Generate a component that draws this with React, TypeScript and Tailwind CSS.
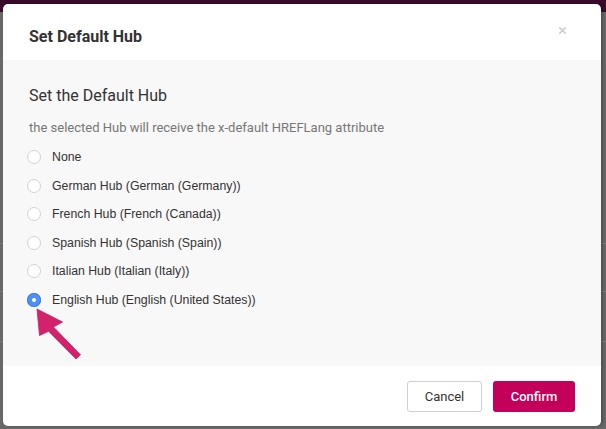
import { X } from "lucide-react";

const hubs = [
  "None",
  "German Hub (German (Germany))",
  "French Hub (French (Canada))",
  "Spanish Hub (Spanish (Spain))",
  "Italian Hub (Italian (Italy))",
  "English Hub (English (United States))",
];

const SELECTED = 5;

function Radio({ checked }: { checked: boolean }) {
  if (checked) {
    return (
      <span className="flex h-[14px] w-[14px] shrink-0 items-center justify-center rounded-full bg-[#4f8ff7] shadow-[inset_0_0_0_1px_#3f7fe6]">
        <span className="h-[4px] w-[4px] rounded-full bg-white" />
      </span>
    );
  }
  return (
    <span className="h-[14px] w-[14px] shrink-0 rounded-full border-[1.5px] border-[#d3d3d3] bg-white" />
  );
}

export default function App() {
  return (
    <div className="relative h-[429px] w-[606px] overflow-hidden bg-[#686868] font-['Roboto',sans-serif]">
      {/* page behind the overlay */}
      <div className="h-[12px] bg-[#3b0b2b]" />
      <div className="mt-[231px] h-px bg-[#7a7a7a]" />
      <div className="mt-[47px] h-px bg-[#7a7a7a]" />
      <div className="mt-[49px] h-px bg-[#7a7a7a]" />

      {/* modal */}
      <div className="absolute left-[3px] top-[4px] flex h-[422px] w-[598px] flex-col overflow-hidden rounded-[5px] bg-white shadow-[2px_0_3px_rgba(0,0,0,0.25)]">
        <div className="relative h-[56px] shrink-0 px-[26px] pt-[23px]">
          <h2 className="text-[16px] font-bold leading-[20px] text-[#333]">Set Default Hub</h2>
          <button className="absolute right-[33px] top-[21px] text-[#c8c8c8]" aria-label="Close">
            <X className="h-[11px] w-[11px]" strokeWidth={3} />
          </button>
        </div>

        <div className="flex-1 bg-[#f8f8f8] px-[26px] pt-[25px]">
          <h3 className="text-[16px] leading-[22px] text-[#333]">Set the Default Hub</h3>
          <p className="mt-[13px] text-[13px] leading-[16px] text-[#777]">
            the selected Hub will receive the x-default HREFLang attribute
          </p>
          <div className="-ml-[2px] mt-[7px] flex flex-col font-['Liberation_Sans',Arial,sans-serif]">
            {hubs.map((hub, i) => (
              <label key={hub} className="flex h-[28.5px] items-center gap-[11px] text-[12.3px] text-[#333]">
                <Radio checked={i === SELECTED} />
                <span>{hub}</span>
              </label>
            ))}
          </div>
        </div>

        <div className="flex h-[60px] shrink-0 items-center justify-end gap-[11px] pr-[26px] pt-[1px]">
          <button className="h-[31px] w-[75px] rounded-[3px] border border-[#cfcfcf] bg-white text-[13px] text-[#333]">
            Cancel
          </button>
          <button className="h-[31px] w-[82px] rounded-[3px] bg-[#c3005a] text-[13px] font-medium text-white">
            Confirm
          </button>
        </div>
      </div>

      {/* annotation arrow */}
      <svg className="pointer-events-none absolute left-0 top-0" width="606" height="429">
        <polygon
          points="37,309 62.5,322 53.5,327 80.5,354.8 76,359 48.6,331.3 39.5,335.5"
          fill="#d2226c"
          stroke="#c81e66"
          strokeWidth="0.8"
          strokeLinejoin="round"
        />
      </svg>
    </div>
  );
}
